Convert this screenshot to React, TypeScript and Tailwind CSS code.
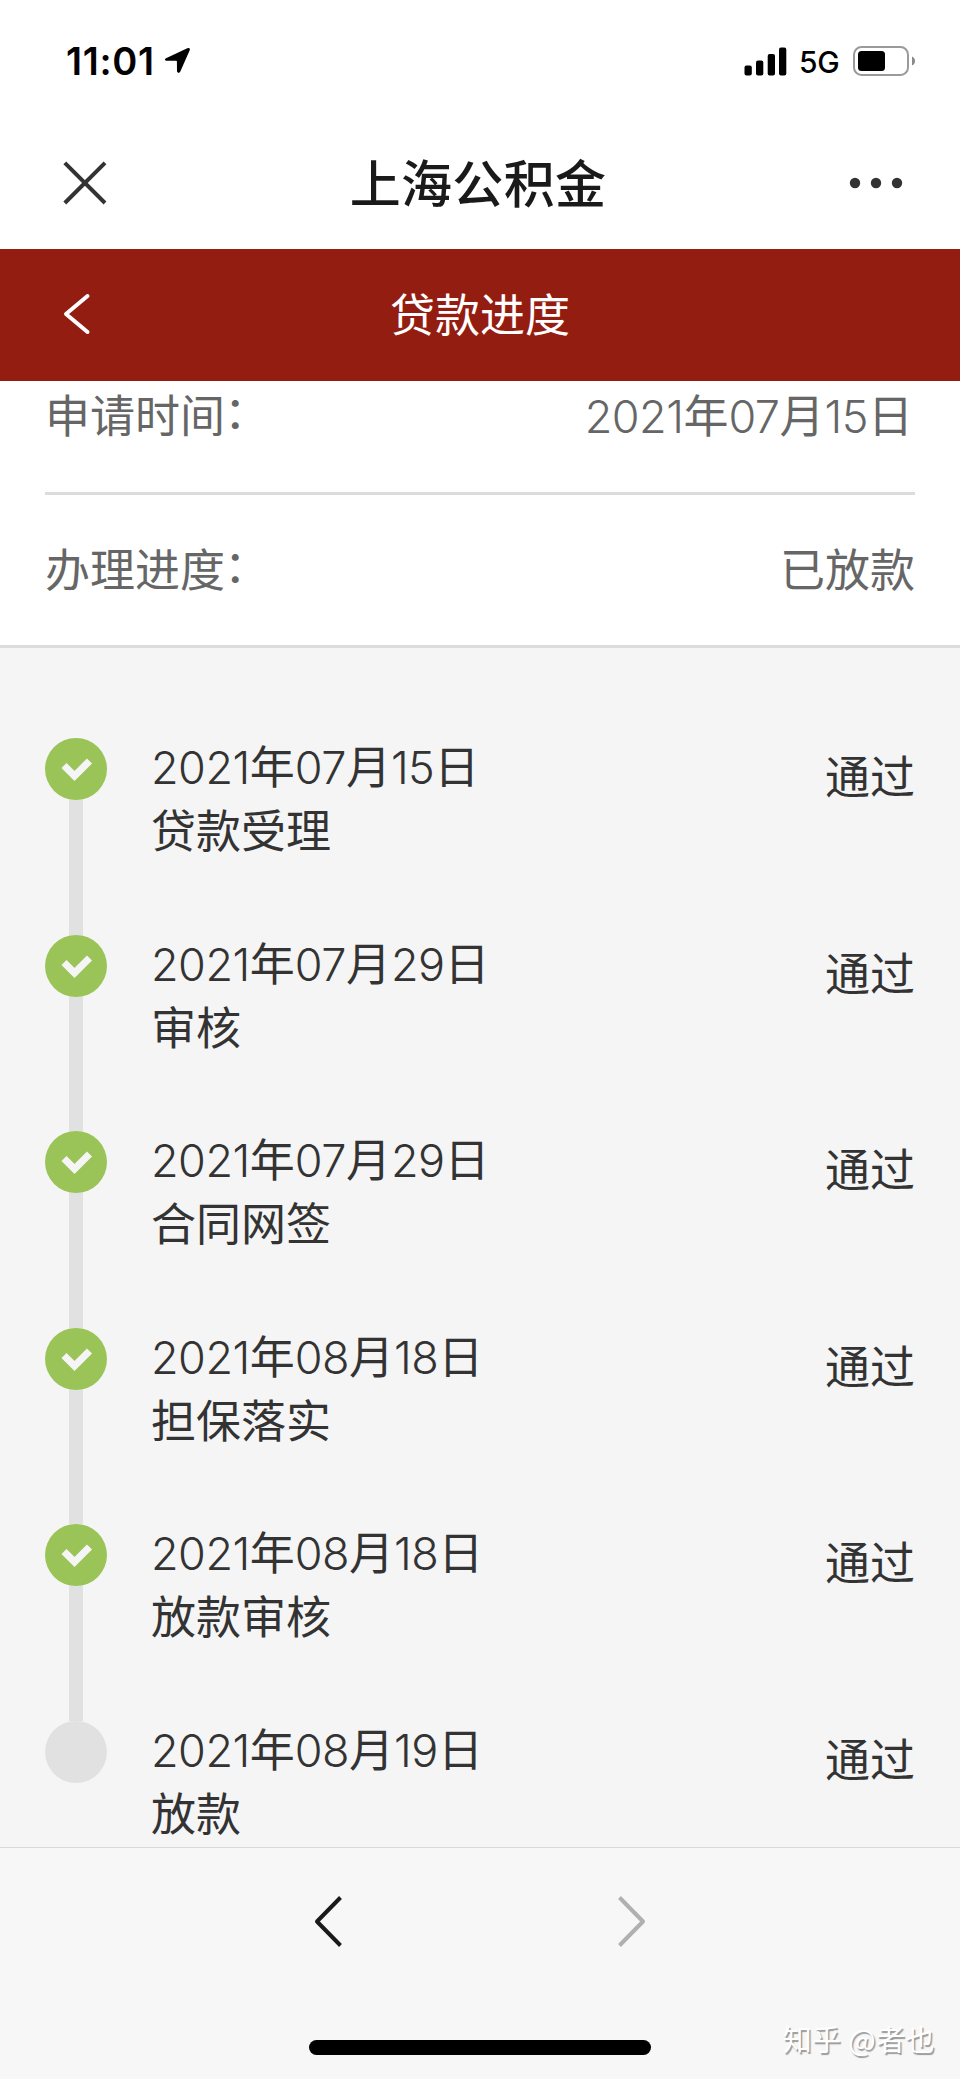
type Step = { date: string; name: string; result: string; done: boolean };

const steps: Step[] = [
  { date: "2021年07月15日", name: "贷款受理", result: "通过", done: true },
  { date: "2021年07月29日", name: "审核", result: "通过", done: true },
  { date: "2021年07月29日", name: "合同网签", result: "通过", done: true },
  { date: "2021年08月18日", name: "担保落实", result: "通过", done: true },
  { date: "2021年08月18日", name: "放款审核", result: "通过", done: true },
  { date: "2021年08月19日", name: "放款", result: "通过", done: false },
];

function StatusBar() {
  return (
    <div className="flex h-[122px] items-center justify-between pl-[66px] pr-[45px]">
      <div className="flex items-center gap-[9px]">
        <span className="text-[38px] font-semibold leading-none tracking-[0.7px] text-black">11:01</span>
        <svg width="27" height="27" viewBox="0 0 27 27" className="mb-[2px]">
          <path d="M2 11.2 23.3 1.2Q26.600.1 25.600 3.600L16.200 24.800Q14.600 27.200 13 24.500L12.900 14.600Q12.900 13.800 12.100 13.800L2.200 13.800Q-.4 12.800 2 11.200Z" fill="#000" />
        </svg>
      </div>
      <div className="flex items-center">
        <svg width="43" height="29" viewBox="0 0 43 29">
          <rect x="0.500" y="18.500" width="7.300" height="10" rx="2" />
          <rect x="12" y="13.500" width="7.300" height="15" rx="2" />
          <rect x="23.700" y="7" width="7.300" height="21.500" rx="2" />
          <rect x="35" y="0.500" width="7.300" height="28" rx="2" />
        </svg>
        <span className="ml-[12px] mt-[2px] w-[42px] text-[30px] font-medium leading-none tracking-[-0.3px] text-black">5G</span>
        <svg width="62" height="30" viewBox="0 0 62 30" className="ml-[12px]">
          <rect x="1" y="1" width="54" height="28" rx="7.500" fill="none" stroke="#9a9a9a" strokeWidth="2" />
          <rect x="5" y="5" width="27" height="20" rx="3.500" />
          <path d="M59 10.500Q62 12 62 15T59 19.500Z" fill="#8a8a8a" />
        </svg>
      </div>
    </div>
  );
}

function TitleBar() {
  return (
    <div className="flex h-[127px] items-center justify-between px-[63px] pb-[5px]">
      <svg width="44" height="44" viewBox="0 0 44 44" fill="none" stroke="#333" strokeWidth="4">
        <path d="M1.800 1.800 42 42M42 1.800 1.800 42" />
      </svg>
      <h1 className="mt-[3px] text-[51px] font-medium leading-none tracking-[0.3px] text-[#1a1a1a]">上海公积金</h1>
      <svg width="54" height="12" viewBox="0 0 54 12" fill="#333" className="-mr-[6px]">
        <circle cx="6" cy="6" r="5.200" />
        <circle cx="27" cy="6" r="5.200" />
        <circle cx="48" cy="6" r="5.200" />
      </svg>
    </div>
  );
}

function PageHeader() {
  return (
    <div className="grid h-[132px] grid-cols-[110px_1fr_110px] items-center bg-[#941d12]">
      <svg width="28" height="42" viewBox="0 0 28 42" fill="none" stroke="#fff" strokeWidth="4" strokeLinecap="round" strokeLinejoin="round" className="ml-[63px] mb-[2px]">
        <path d="M24.500 3 3 21 24.500 39" />
      </svg>
      <h2 className="text-center text-[45px] font-normal leading-none text-white">贷款进度</h2>
    </div>
  );
}

function DateText({ value }: { value: string }) {
  return (
    <>
      {value.split(/(\d+)/).map((part, i) =>
        /\d/.test(part) ? (
          <span key={i} className="font-[350] tracking-[-0.5px]">{part}</span>
        ) : (
          part
        ),
      )}
    </>
  );
}

function Label({ text }: { text: string }) {
  return (
    <span>
      {text}
      <span className="-ml-[1px] inline-block -translate-y-[4px]">：</span>
    </span>
  );
}

function CheckMark() {
  return (
    <svg width="62" height="62" viewBox="0 0 62 62" className="shrink-0">
      <circle cx="31" cy="31" r="31" fill="#9ac457" />
      <path d="M19 27.500 29.500 38 44.500 23" fill="none" stroke="#f5f5f5" strokeWidth="7.200" />
    </svg>
  );
}

function TimelineStep({ step }: { step: Step }) {
  return (
    <li className="flex h-[196.600px] shrink-0">
      <div className="flex w-[62px] flex-col items-center">
        {step.done ? <CheckMark /> : <div className="h-[62px] w-[62px] rounded-full bg-[#e1e1e1]" />}
        {step.done && <div className="w-[14px] grow bg-[#e1e1e1]" />}
      </div>
      <div className="-mt-[2px] ml-[44px] grow leading-[64px]">
        <div><DateText value={step.date} /></div>
        <div>{step.name}</div>
      </div>
      <div className="mt-[8px] leading-[63px]">{step.result}</div>
    </li>
  );
}

export default function App() {
  return (
    <div className="flex h-[2079px] w-[960px] flex-col overflow-hidden bg-white font-['Inter','Noto_Sans_CJK_SC',sans-serif]">
      <StatusBar />
      <TitleBar />
      <PageHeader />
      <div className="text-[45px] text-[#666]">
        <div className="mx-[45px] flex h-[114px] items-start justify-between border-b-[3px] border-[#dcdcdc] pt-[4px] leading-[63px]">
          <Label text="申请时间" />
          <span className="mr-[2px]"><DateText value="2021年07月15日" /></span>
        </div>
        <div className="flex h-[153px] items-center justify-between border-b-[3px] border-[#dcdcdc] px-[45px] leading-[63px]">
          <Label text="办理进度" />
          <span>已放款</span>
        </div>
      </div>
      <ul className="flex h-[1199px] flex-col overflow-hidden bg-[#f5f5f5] px-[45px] pt-[90px] text-[45px] text-[#333]">
        {steps.map((step, i) => (
          <TimelineStep key={i} step={step} />
        ))}
      </ul>
      <div className="relative flex h-[232px] flex-col items-center border-t border-[#d9d9d9] bg-[#f7f7f7]">
        <div className="mt-[48px] flex w-full justify-between pl-[314px] pr-[314px]">
          <svg width="28" height="51" viewBox="0 0 28 51" fill="none" stroke="#1a1a1a" strokeWidth="4" strokeLinejoin="round">
            <path d="M26.500 1.500 3 25.500 26.500 49.500" />
          </svg>
          <svg width="28" height="51" viewBox="0 0 28 51" fill="none" stroke="#b0b0b0" strokeWidth="4" strokeLinejoin="round">
            <path d="M1.500 1.500 25 25.500 1.500 49.500" />
          </svg>
        </div>
        <div className="mt-[93px] h-[15px] w-[342px] rounded-full bg-black" />
        <span className="absolute bottom-[25px] right-[25px] whitespace-nowrap font-['Noto_Sans_CJK_SC',sans-serif] text-[29px] font-normal leading-[32px] tracking-[0.4px] text-white [text-shadow:1.5px_1.5px_1px_#999]">知乎 @者也</span>
      </div>
    </div>
  );
}
